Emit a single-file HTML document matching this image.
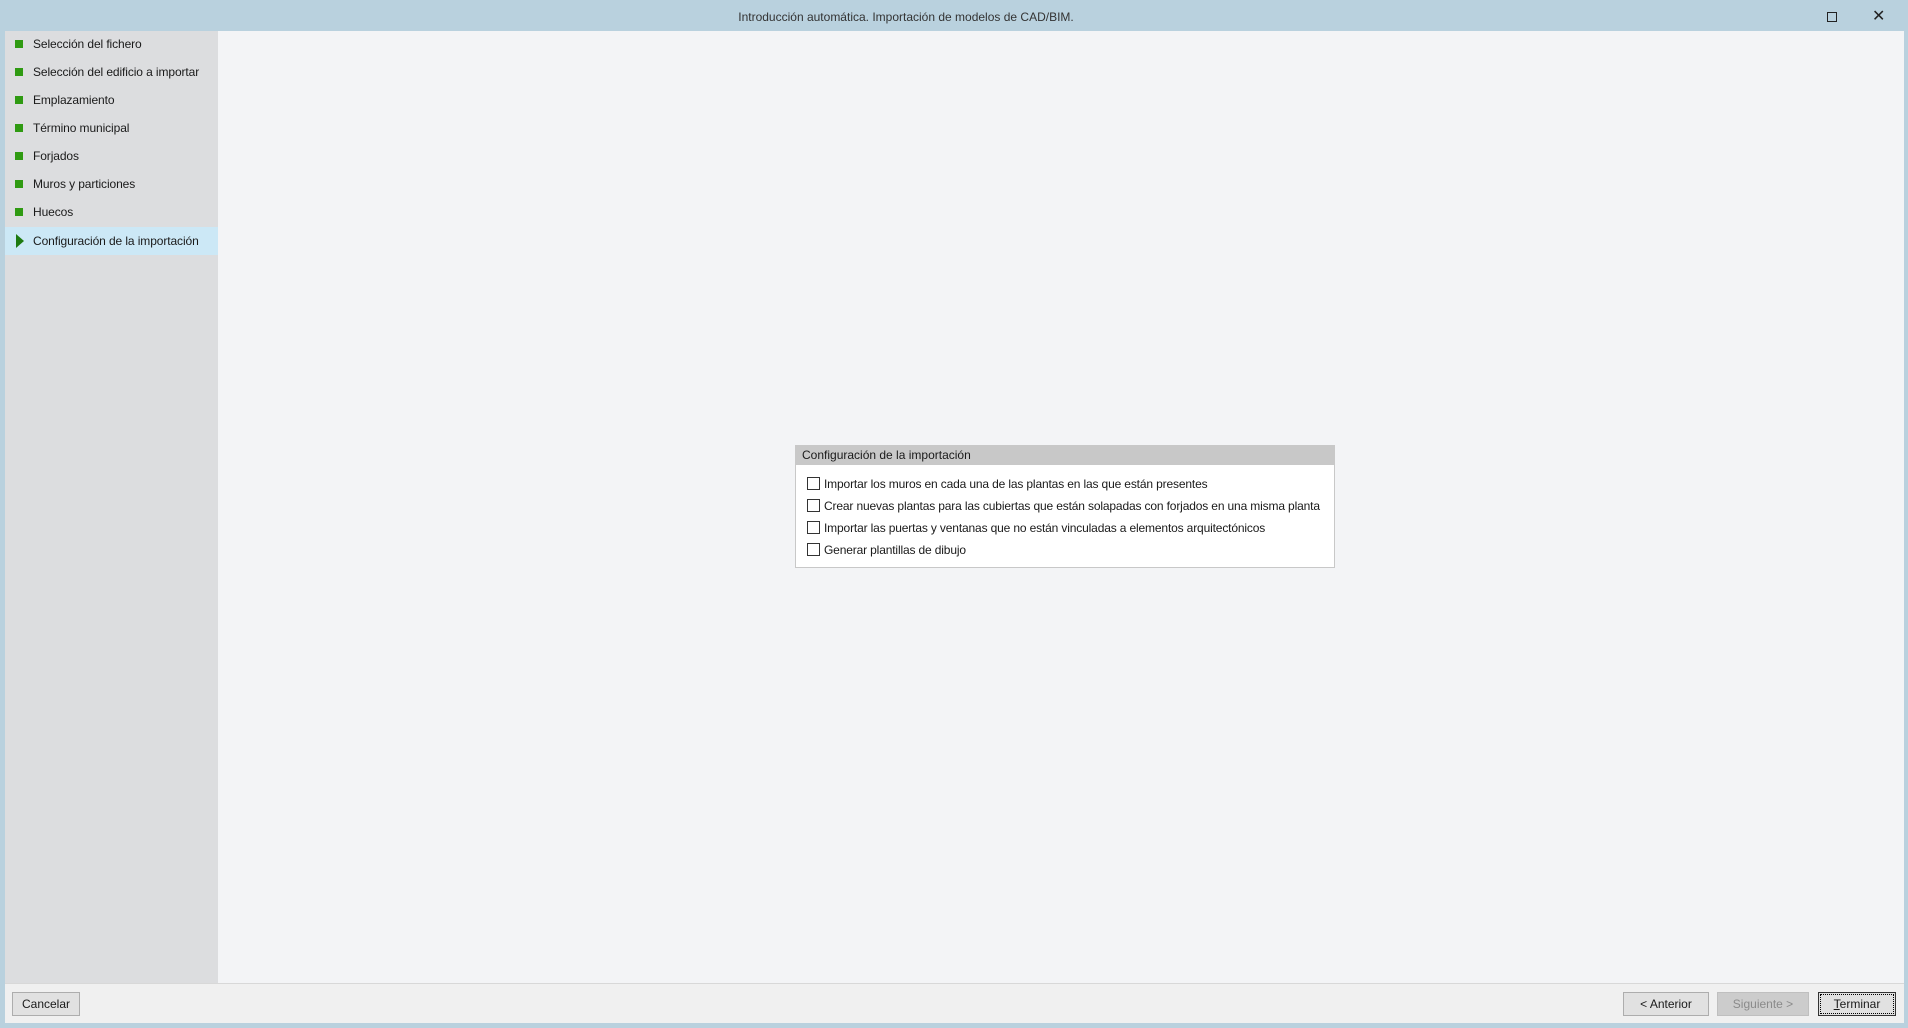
<!DOCTYPE html>
<html><head><meta charset="utf-8"><style>
*{margin:0;padding:0;box-sizing:border-box}
body{width:1908px;height:1028px;background:#b9d1de;font-family:"Liberation Sans",sans-serif;font-size:12px;color:#1a1a1a;position:relative;overflow:hidden;white-space:nowrap}
.abs{position:absolute}
#title{left:0;top:0;width:1812px;height:31px;text-align:center;line-height:34px;font-size:12px;color:#333}
#main{left:5px;top:31px;width:1899px;height:952px;background:#f3f4f6}
#side{left:5px;top:31px;width:213px;height:952px;background:#dcdddf}
.it{position:absolute;left:33px;height:28px;line-height:28px;letter-spacing:-0.1px}
.sq{position:absolute;left:15px;width:8px;height:8px;background:#2f9a12}
#sel{left:5px;top:227px;width:213px;height:28px;background:#cce8f6}
#bot{left:5px;top:983px;width:1899px;height:40px;background:#f0f0f0;border-top:1px solid #d8d8d8}
.btn{position:absolute;height:24px;border:1px solid #adadad;background:#e1e1e1;text-align:center;line-height:22px;font-size:12px}
#panel{left:795px;top:445px;width:540px;height:123px;background:#fff;border:1px solid #c8c8c8}
#ph{position:absolute;left:0;top:0;width:100%;height:19px;background:#c8c8c8;line-height:19px;padding-left:6px}
.cb{position:absolute;left:11px;width:13px;height:13px;border:1px solid #333;background:#fff}
.cl{position:absolute;left:28px;line-height:14px;letter-spacing:-0.15px}
</style></head><body>
<div class="abs" id="title">Introducción automática. Importación de modelos de CAD/BIM.</div>
<div class="abs" style="left:1827px;top:12px;width:10px;height:10px;border:1px solid #222"></div>
<div class="abs" style="left:1872px;top:8px;font-size:16px;line-height:18px;color:#222">✕</div>
<div class="abs" id="main"></div>
<div class="abs" id="side"></div>
<div class="abs" id="sel"></div>
<div class="sq" style="top:40px"></div><div class="it" style="top:30px">Selección del fichero</div>
<div class="sq" style="top:68px"></div><div class="it" style="top:58px">Selección del edificio a importar</div>
<div class="sq" style="top:96px"></div><div class="it" style="top:86px">Emplazamiento</div>
<div class="sq" style="top:124px"></div><div class="it" style="top:114px">Término municipal</div>
<div class="sq" style="top:152px"></div><div class="it" style="top:142px">Forjados</div>
<div class="sq" style="top:180px"></div><div class="it" style="top:170px">Muros y particiones</div>
<div class="sq" style="top:208px"></div><div class="it" style="top:198px">Huecos</div>
<div class="abs" style="left:16px;top:234px;width:0;height:0;border-top:7px solid transparent;border-bottom:7px solid transparent;border-left:8px solid #1e7a10"></div>
<div class="it" style="top:227px">Configuración de la importación</div>
<div class="abs" id="panel">
<div id="ph">Configuración de la importación</div>
<div class="cb" style="top:31px"></div><div class="cl" style="top:31px">Importar los muros en cada una de las plantas en las que están presentes</div>
<div class="cb" style="top:53px"></div><div class="cl" style="top:53px">Crear nuevas plantas para las cubiertas que están solapadas con forjados en una misma planta</div>
<div class="cb" style="top:75px"></div><div class="cl" style="top:75px">Importar las puertas y ventanas que no están vinculadas a elementos arquitectónicos</div>
<div class="cb" style="top:97px"></div><div class="cl" style="top:97px">Generar plantillas de dibujo</div>
</div>
<div class="abs" id="bot"></div>
<div class="btn" style="left:12px;top:992px;width:68px">Cancelar</div>
<div class="btn" style="left:1623px;top:992px;width:86px">&lt; Anterior</div>
<div class="btn" style="left:1717px;top:992px;width:92px;background:#cccccc;border-color:#bfbfbf;color:#8a8a8a">Siguiente &gt;</div>
<div class="btn" style="left:1818px;top:992px;width:78px;border:1px solid #333;outline:1px dotted #000;outline-offset:-3px"><u>T</u>erminar</div>
</body></html>
